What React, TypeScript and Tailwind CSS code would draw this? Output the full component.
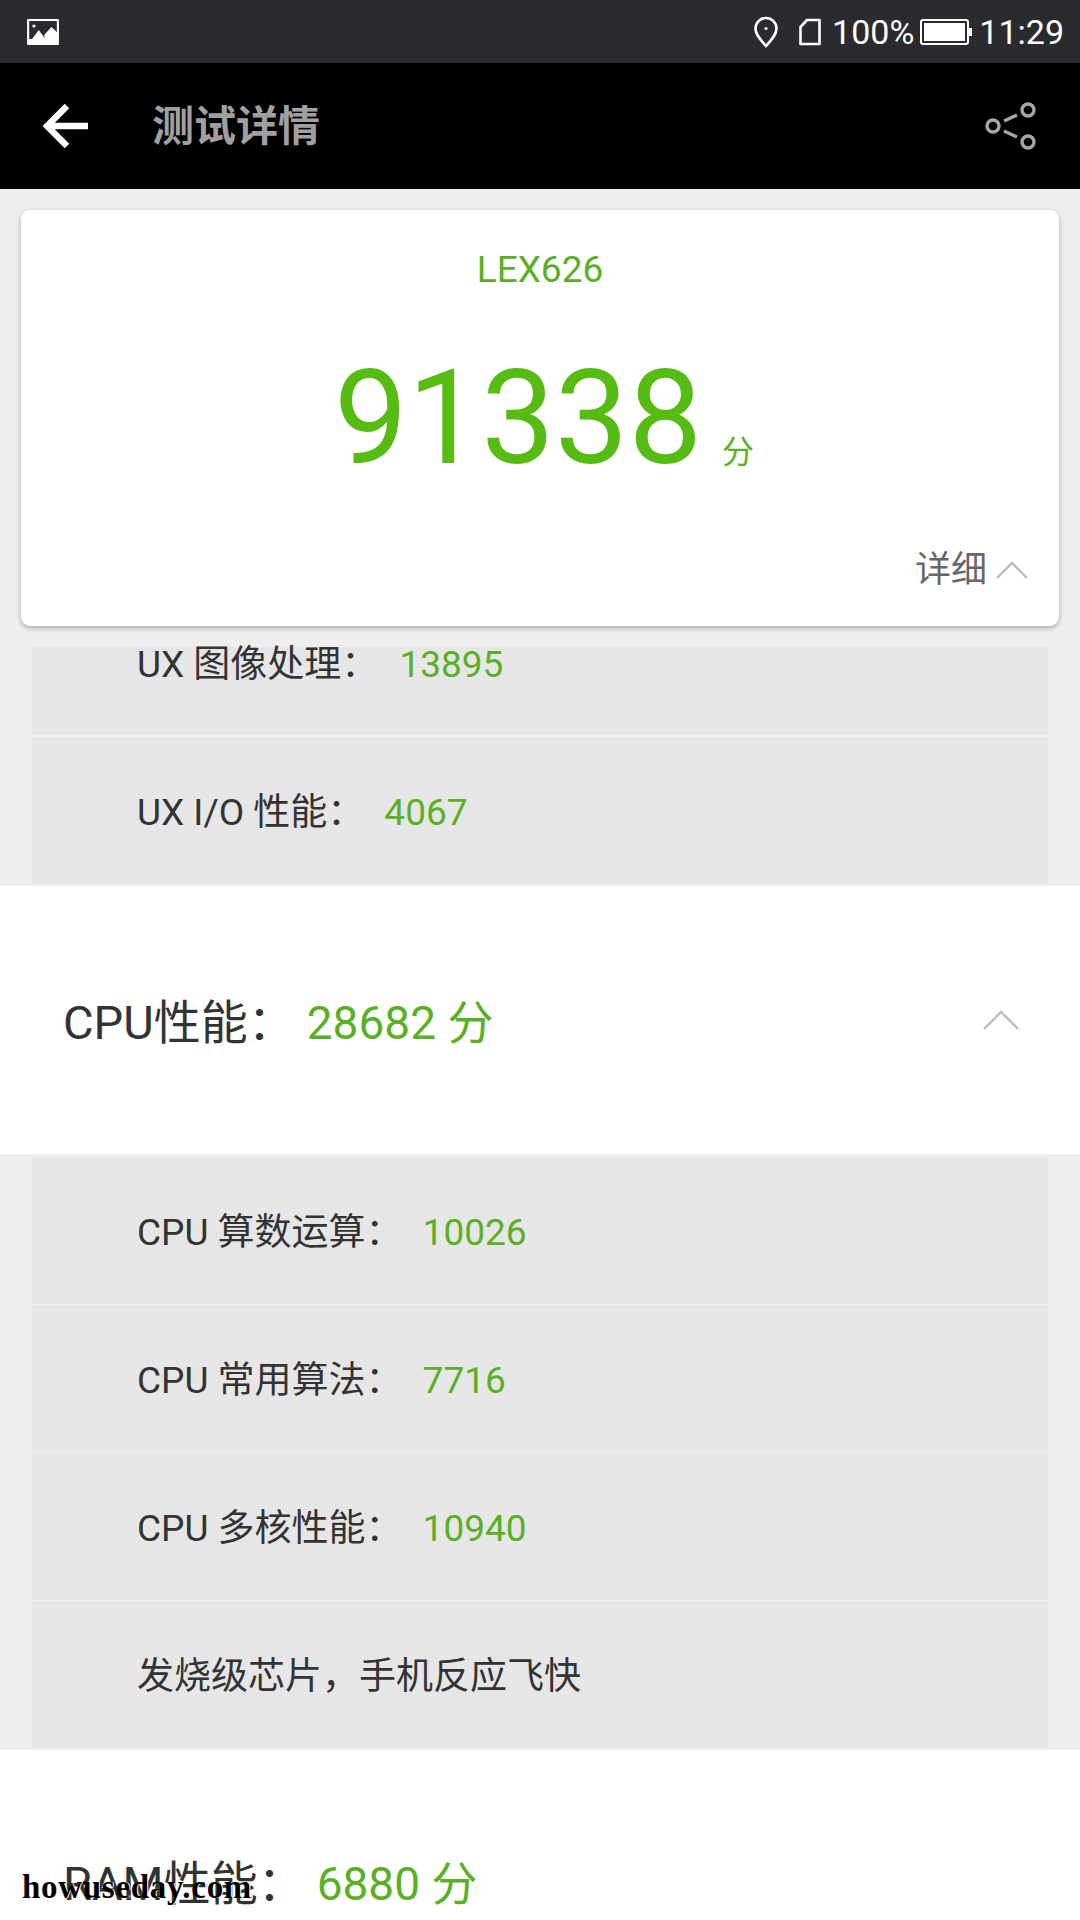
import React from 'react';

const cjk = "font-['Roboto','Noto_Sans_CJK_SC',sans-serif]";

interface ScoreRowProps {
  label: string;
  value?: string;
}

function ScoreRow({ label, value }: ScoreRowProps) {
  return (
    <div className="flex h-[147px] items-center bg-[#e6e6e6] pl-[105px] pt-[4px] text-[37px] text-[#333333]">
      <span>{label}</span>
      {value && <span className="ml-[20px] text-[#5ab024]">{value}</span>}
    </div>
  );
}

function SectionHead({ title, score }: { title: string; score: string }) {
  return (
    <div className="flex h-[268px] items-center justify-between bg-white pl-[63px] pr-[61px]">
      <div className="mt-[7px] flex items-center text-[#333333]">
        <span className="text-[47px]">{title}</span>
        <span className="ml-[12px] text-[46px] text-[#5ab024]">{score}</span>
      </div>
      <svg width="36" height="22" viewBox="0 0 36 22" fill="none" stroke="#bdbdbd" strokeWidth="2.4">
        <path d="M1 20 L18 3 L35 20" />
      </svg>
    </div>
  );
}

export default function App() {
  return (
    <div className={`relative h-[1920px] w-[1080px] overflow-hidden bg-[#eeeeec] ${cjk}`}>
      {/* status bar */}
      <div className="flex h-[63px] items-center justify-between bg-[#2a2b2f] pl-[26px] pr-[16px] text-white">
        <svg width="34" height="28" viewBox="0 0 32 28" preserveAspectRatio="none">
          <rect x="1" y="1" width="30" height="26" rx="1" fill="#fff" />
          <rect x="3" y="3" width="26" height="18" fill="#2a2b2f" />
          <path d="M3 25 L12 12 L21 25 Z M17 17 L24 9 L30 15 V25 H19 Z" fill="#fff" />
          <circle cx="7.5" cy="8" r="1.5" fill="#fff" />
        </svg>
        <div className="flex items-center text-[34px] leading-none">
          <svg width="26" height="32" viewBox="0 0 26 32" fill="none" stroke="#fff" strokeWidth="2.6">
            <path d="M13 30 C8 24 2.5 19 2.5 12.5 A10.5 10.5 0 0 1 23.5 12.5 C23.5 19 18 24 13 30 Z" />
            <circle cx="13" cy="12.5" r="1.6" fill="#fff" stroke="none" />
          </svg>
          <svg className="ml-[19px]" width="24" height="28" viewBox="0 0 24 28" fill="none" stroke="#fff" strokeWidth="2.6">
            <path d="M9 2 H21.5 V26 H2.5 V9 Z" strokeLinejoin="round" />
          </svg>
          <span className="ml-[10px]">100%</span>
          <svg className="ml-[6px]" width="52" height="26" viewBox="0 0 52 26">
            <rect x="1" y="1" width="47" height="24" rx="2" fill="none" stroke="#fff" strokeWidth="2" />
            <rect x="4" y="4" width="41" height="18" fill="#fff" />
            <rect x="48" y="9" width="4" height="8" fill="#fff" />
          </svg>
          <span className="ml-[7px]">11:29</span>
        </div>
      </div>

      {/* toolbar */}
      <div className="flex h-[126px] items-center justify-between bg-black pl-[43px] pr-[41px]">
        <div className="flex items-center">
          <svg width="46" height="46" viewBox="0 0 46 46" fill="none" stroke="#fff" strokeWidth="6.5">
            <path d="M45 23 H4 M24 3 L4 23 L24 43" />
          </svg>
          <span className="ml-[63px] mt-[2px] text-[42px] font-bold leading-none text-[#a0a0a0]">测试详情</span>
        </div>
        <svg width="54" height="50" viewBox="0 0 54 50" fill="none" stroke="#a6a6a6" strokeWidth="3.4">
          <circle cx="8" cy="25" r="6" />
          <circle cx="43" cy="9" r="6" />
          <circle cx="43" cy="41" r="6" />
          <path d="M19 20 L32 14 M19 30 L32 36" />
        </svg>
      </div>

      {/* score card */}
      <div className="relative z-10 mx-[21px] mt-[21px] flex h-[416px] flex-col items-center rounded-[9px] bg-white shadow-[0_2px_5px_rgba(0,0,0,0.3)]">
        <div className="mt-[39px] text-[37px] leading-[42px] text-[#5ab024]">LEX626</div>
        <div className="mt-[57px] flex items-end pl-[8px]">
          <span className="text-[131px] leading-[140px] text-[#56bc14]">91338</span>
          <span className="mb-[16px] ml-[20px] text-[32px] leading-[40px] text-[#5ab024]">分</span>
        </div>
        <div className="mt-[59px] flex items-center self-end pr-[31px]">
          <span className="text-[36px] leading-[46px] text-[#666666]">详细</span>
          <svg className="ml-[9px]" width="32" height="20" viewBox="0 0 32 20" fill="none" stroke="#bdbdbd" strokeWidth="2.4">
            <path d="M1 18 L16 3 L31 18" />
          </svg>
        </div>
      </div>

      {/* list */}
      <div className="mt-[21px]">
        <div className="mx-[32px] flex h-[88px] items-start bg-[#e6e6e6] pl-[105px] pt-[2px] text-[37px] leading-[32px] text-[#333333]">
          <span>UX 图像处理：</span>
          <span className="ml-[21px] text-[#5ab024]">13895</span>
        </div>
        <div className="mx-[32px] mt-[2px]">
          <ScoreRow label="UX I/O 性能：" value="4067" />
        </div>
        <div className="mt-[2px]">
          <SectionHead title="CPU性能：" score="28682 分" />
        </div>
        <div className="mx-[32px] mt-[3px] flex flex-col gap-[1px]">
          <ScoreRow label="CPU 算数运算：" value="10026" />
          <ScoreRow label="CPU 常用算法：" value="7716" />
          <ScoreRow label="CPU 多核性能：" value="10940" />
          <ScoreRow label="发烧级芯片，手机反应飞快" />
        </div>
        <div className="mt-[2px] flex h-[171px] items-end bg-white pb-[7px] pl-[63px] leading-[60px] text-[#333333]">
          <span className="text-[47px]">RAM性能：</span>
          <span className="ml-[12px] text-[46px] text-[#5ab024]">6880 分</span>
        </div>
      </div>

      {/* watermark burned into the image */}
      <div className="absolute bottom-[16px] left-[22px] z-20 font-['Liberation_Serif',serif] text-[33px] font-bold leading-none tracking-[0.7px] text-black [text-shadow:1px_0_0_#fff]">
        howuseday.com
      </div>
    </div>
  );
}
